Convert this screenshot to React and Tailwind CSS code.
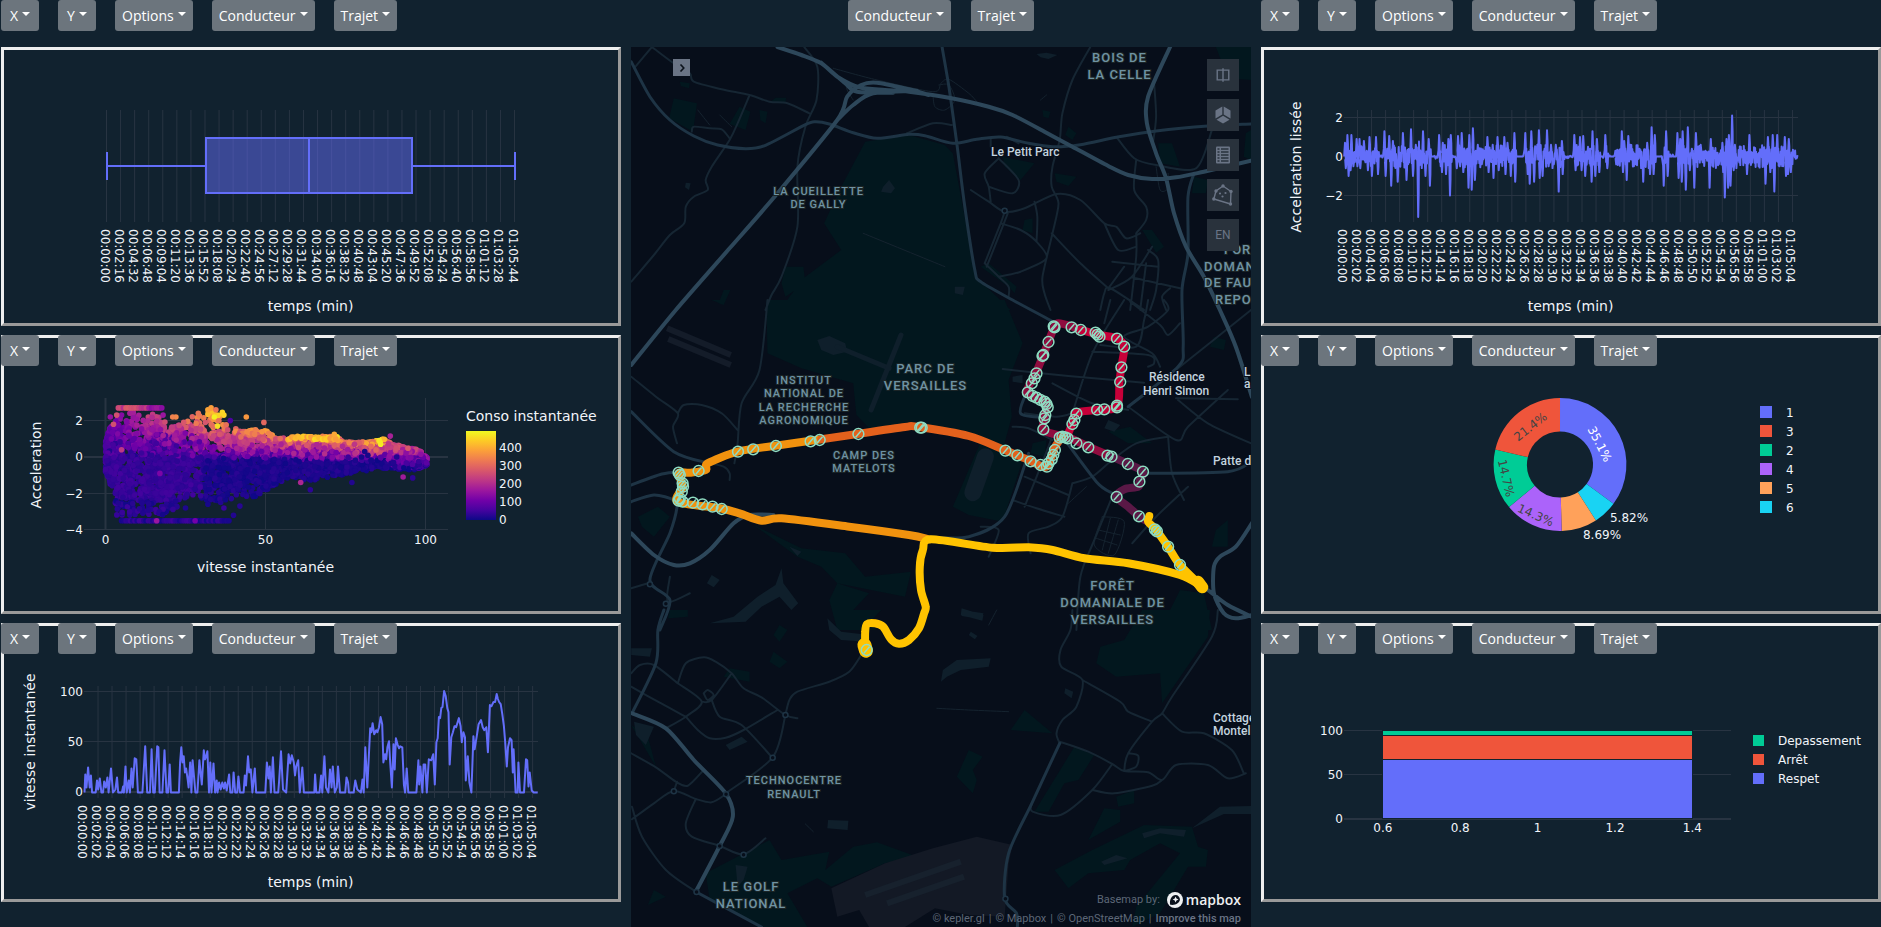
import React from "react";

/* ---------- shared helpers ---------- */

const rng = (seed) => () => {
  seed = (seed * 1664525 + 1013904223) % 4294967296;
  return seed / 4294967296;
};

const pad = (n) => String(n).padStart(2, "0");
const clock = (s) => `${pad(Math.floor(s / 3600))}:${pad(Math.floor(s / 60) % 60)}:${pad(s % 60)}`;

const parse = (str) =>
  str
    .trim()
    .split(/\s+/)
    .map((p) => p.split(",").map(Number));

const GRID = "#283442";
const BLUE = "#636efa";

/* ---------- toolbar ---------- */

function MenuButton({ label }) {
  return (
    <button
      type="button"
      className="flex h-[31px] min-w-[38px] items-center justify-center gap-1 rounded-[3px] bg-[#6c757d] px-[7px] text-[14px] leading-[21px] text-white"
    >
      {label}
      <svg viewBox="0 0 8 4" className="mb-[3px] h-1 w-2" aria-hidden="true">
        <path d="M0 0h8L4 4z" fill="currentColor" />
      </svg>
    </button>
  );
}

function Toolbar() {
  return (
    <div className="flex gap-[19px]">
      {["X", "Y", "Options", "Conducteur", "Trajet"].map((l) => (
        <MenuButton key={l} label={l} />
      ))}
    </div>
  );
}

function Panel({ overlay, children }) {
  return (
    <section className="relative border-[3px] border-t-[#eeeeee] border-r-[#9a9a9a] border-b-[#9a9a9a] border-l-[#eeeeee]">
      {overlay && (
        <div className="absolute -top-[3px] -left-[3px]">
          <Toolbar />
        </div>
      )}
      {children}
    </section>
  );
}

function Chart({ x, y, title, children }) {
  return (
    <svg
      viewBox={`${x} ${y} 614 273`}
      role="img"
      aria-label={title}
      className="block h-auto w-full font-['DejaVu_Sans',Verdana,sans-serif] text-[12px]"
      fill="#f2f5fa"
    >
      {children}
    </svg>
  );
}

function VGrid({ count, x0, step, y1, y2, seconds, from = 0 }) {
  return (
    <g>
      {Array.from({ length: count }, (_, i) => {
        const x = x0 + i * step;
        return (
          <g key={i}>
            {i >= from && <line x1={x} x2={x} y1={y1} y2={y2} stroke={GRID} />}
            <text transform={`translate(${x - 6} ${y2 + 7}) rotate(90)`}>{clock(i * seconds)}</text>
          </g>
        );
      })}
    </g>
  );
}

function HGrid({ rows, x1, x2 }) {
  return (
    <g>
      {rows.map(([label, y, w]) => (
        <g key={label}>
          <line x1={x1} x2={x2} y1={y} y2={y} stroke={GRID} strokeWidth={w || 1} />
          <text x={x1 - 1} y={y + 4} textAnchor="end">
            {label}
          </text>
        </g>
      ))}
    </g>
  );
}

function AxisTitle({ x, y, vertical, children }) {
  return (
    <text
      className="text-[14px]"
      textAnchor="middle"
      transform={`translate(${x} ${y})${vertical ? " rotate(-90)" : ""}`}
    >
      {children}
    </text>
  );
}

/* ---------- charts ---------- */

function BoxPlot() {
  return (
    <Chart x={4} y={50} title="temps (min)">
      <VGrid count={30} x0={106.5} step={14.07} y1={110} y2={222} seconds={136} />
      <g stroke={BLUE} strokeWidth="2">
        <rect x="206" y="138" width="206" height="55" fill={BLUE} fillOpacity="0.5" />
        <path d="M309 138v55M107 166h99M412 166h103M107 152v28M515 152v28" fill="none" />
      </g>
      <AxisTitle x={310.5} y={311}>temps (min)</AxisTitle>
    </Chart>
  );
}

const PLASMA = [
  [13, 8, 135], [70, 3, 159], [114, 1, 168], [156, 23, 158], [189, 55, 134],
  [216, 87, 107], [237, 121, 83], [251, 159, 58], [253, 202, 38], [240, 249, 33],
];

const plasma = (v) => {
  const t = Math.max(0, Math.min(0.999, v / 490)) * 9;
  const i = Math.floor(t);
  const c = PLASMA[i].map((a, k) => Math.round(a + (PLASMA[i + 1][k] - a) * (t - i)));
  return `rgb(${c.join(",")})`;
};

const UPPER = parse(
  "0,0.8 1,1.5 4,2.3 8,2.5 14,2.4 18,2.2 20,1.8 24,2 28,2.3 33,2.6 37,2.1 40,1.6 45,1.5 50,1.5 53,1.1 60,1.0 65,1.15 72,1.15 75,0.85 83,0.85 87,1 90,0.7 95,0.5 98,0.4 101,-0.1"
);
const LOWER = parse(
  "0,-0.8 2,-1.8 4,-2.3 12,-2.4 20,-2.4 30,-2.4 40,-2.4 47,-2.2 52,-1.6 58,-1.1 64,-1.3 70,-1.1 78,-0.9 85,-0.6 90,-0.7 97,-0.7 101,-0.4"
);

const at = (curve, x) => {
  for (let i = 1; i < curve.length; i++) {
    if (x <= curve[i][0]) {
      const [x0, y0] = curve[i - 1];
      const [x1, y1] = curve[i];
      return y0 + ((y1 - y0) * (x - x0)) / (x1 - x0);
    }
  }
  return curve[curve.length - 1][1];
};

const CLOUD = (() => {
  const r = rng(7);
  const pts = [];
  for (let i = 0; i < 4400; i++) {
    const v = 100.5 * (r() < 0.55 ? Math.pow(r(), 1.15) : r());
    const hi = at(UPPER, v);
    const lo = at(LOWER, v);
    const a = lo + (hi - lo) * r();
    if (v < 27 && a > 1.7 && r() < 0.65) continue;
    if (v > 27 && v < 45 && a > 1.5 && r() < 0.6) continue;
    if (v > 22 && a < -1.7 && r() < 0.65) continue;
    if (v > 53 && a < -0.6 && r() < 0.5) continue;
    let conso;
    if (v > 88) conso = 130 + a * 190 + (r() - 0.5) * 110;
    else if (a < 0.1 - v * 0.004) conso = (v < 30 ? 26 : 2) + r() * 26;
    else conso = 50 + a * (26 + v * 3.3) + v * 0.6 + (r() - 0.5) * (50 + v * 1.4);
    if (v < 30 && a > 0 && a < 1.4 && r() < 0.3) conso *= 0.5;
    pts.push([v, a, conso]);
  }
  for (let v = 4; v <= 18; v += 0.8) pts.push([v, 2.7, v < 13 ? 200 + 90 * r() : 130 + 40 * r()]);
  for (let v = 5; v <= 39; v += 0.7) pts.push([v, -3.5, 50 * r()]);
  for (let i = 0; i < 75; i++) pts.push([3 + 20 * r(), -2.4 - 0.8 * r(), 45 * r()]);
  for (let v = 57; v <= 72; v += 0.6) pts.push([v, 0.95 + 0.2 * r(), 370 + 90 * r()]);
  parse(
    "44,2.2,370 40,-3.2,20 42,-2.7,25 37,-2.8,40 25,-2.8,15 36,-2.5,20 32,-2.6,10 89,1.15,180 49.5,1.9,300 61,-1.4,190 93,-1.1,170 96,-1.15,30 77,-1.4,20 64,-1.8,30 71.5,1.25,390 22,2.2,350 32,2.6,390 36.5,2.45,450 34,2.2,480 35,1.7,460 86,0.7,480 85.5,0.9,470 85.8,0.8,470 5,0.4,220 2.5,1.8,260 3.5,2.3,260 17,-0.9,120 28,-3.5,110 16,-3.5,160 1.5,2.2,150 18,2.3,160 21,2.2,340 29,2.4,320 33,2.7,380 34.5,2.6,320 37,2.3,450 39,2,60 90,-0.3,20 91,0,20 80,0,10 81,0.3,10 82,0.1,10 83,-0.2,10"
  ).forEach((p) => pts.push(p));
  return pts;
})();

function ScatterPlot() {
  return (
    <Chart x={4} y={338} title="Acceleration / vitesse instantanée">
      <g stroke={GRID}>
        <line x1="105.5" x2="105.5" y1="398" y2="530" strokeWidth="2" />
        <line x1="265.5" x2="265.5" y1="398" y2="530" />
        <line x1="425.5" x2="425.5" y1="398" y2="530" />
      </g>
      <HGrid x1={84} x2={448} rows={[["2", 420.5], ["0", 457, 2], ["−2", 493.5], ["−4", 529.5]]} />
      <g>
        {CLOUD.map(([v, a, c], i) => (
          <circle
            key={i}
            cx={(105.5 + v * 3.2).toFixed(1)}
            cy={(457 - a * 18.2).toFixed(1)}
            r="2.8"
            fill={plasma(c)}
          />
        ))}
      </g>
      <g textAnchor="middle">
        <text x="105.5" y="544">0</text>
        <text x="265.5" y="544">50</text>
        <text x="425.5" y="544">100</text>
      </g>
      <AxisTitle x={265.5} y={572}>vitesse instantanée</AxisTitle>
      <AxisTitle x={41} y={465} vertical>Acceleration</AxisTitle>
      <defs>
        <linearGradient id="plasma" x1="0" x2="0" y1="1" y2="0">
          {PLASMA.map((c, i) => (
            <stop key={i} offset={i / 9} stopColor={`rgb(${c.join(",")})`} />
          ))}
        </linearGradient>
      </defs>
      <rect x="466" y="431" width="30" height="89" fill="url(#plasma)" />
      <text x="466" y="421" className="text-[14px]">Conso instantanée</text>
      {[0, 100, 200, 300, 400].map((v) => (
        <text key={v} x="499" y={524 - v * 0.18}>{v}</text>
      ))}
    </Chart>
  );
}

const SPEED = parse(`0,0 2,18 5,5 9,25 13,5 16,17 19,0 28,0 31,12 34,3 38,14 42,0 46,0 49,11 53,5 57,15 60,0 66,24 71,0 77,3
81,15 84,0 93,0 96,6 98,0 102,26 105,0 110,12 113,0 117,24 120,5 125,34 129,33 133,0 144,0 151,46 156,0 163,0 167,43 171,0 175,0
181,46 184,45 187,0 194,0 199,42 204,0 208,0 212,28 215,0 235,0 238,30 241,45 244,30 247,36 250,20 253,24 257,12 259,5 263,30 266,0
269,32 276,0 281,0 286,32 292,8 297,42 300,33 303,36 306,41 310,0 313,30 316,0 321,29 325,0 329,12 331,0 335,10 339,3 343,10 347,4
350,10 354,2 360,18 363,0 368,0 371,20 375,0 380,0 383,16 387,0 396,0 399,17 402,7 407,36 410,20 414,23 418,0 424,24 427,0 450,0
454,30 458,14 461,26 464,0 469,35 473,0 482,0 484,10 489,41 494,3 502,0 508,38 512,29 516,37 521,30 524,17 527,26 532,32 536,0
542,25 546,0 572,0 574,18 577,0 585,0 589,17 592,0 597,36 601,5 607,0 611,23 615,5 618,26 623,0 628,5 631,26 636,0 649,0 652,15
656,10 658,0 670,0 674,12 679,3 688,0 692,13 695,0 699,45 704,5 711,64 714,60 717,69 721,58 726,62 729,60 733,65 737,75 741,68
744,30 748,38 751,33 754,45 758,51 761,30 765,5 769,48 772,23 775,54 779,48 783,44 786,46 791,45 795,8 798,0 802,24 806,0 826,0
831,32 833,8 836,26 841,0 844,28 848,28 852,0 857,33 863,32 868,38 872,8 876,50 879,54 882,75 885,74 888,84 891,85 895,101 899,96
903,84 906,80 909,28 913,55 917,60 921,66 925,65 932,74 936,66 939,50 943,60 947,55 949,12 954,36 958,10 963,0 968,56 971,43 976,55
981,68 987,72 991,65 995,62 1000,65 1004,40 1009,87 1013,86 1018,90 1022,90 1026,98 1029,93 1032,90 1036,88 1040,78 1044,66 1047,50
1051,26 1054,45 1059,54 1063,52 1066,20 1068,43 1073,0 1078,0 1080,30 1084,0 1094,0 1099,33 1102,32 1105,6 1108,20 1113,2 1118,0 1128,0`);

function SpeedPlot() {
  const points = SPEED.map(([t, v]) => `${(84.5 + t / 2.489).toFixed(1)},${(793.5 - v * 1.005).toFixed(1)}`).join(" ");
  return (
    <Chart x={4} y={627} title="vitesse instantanée / temps (min)">
      <VGrid count={33} x0={84} step={14.02} y1={687} y2={799} seconds={122} from={1} />
      <HGrid x1={84} x2={538} rows={[["100", 692.5], ["50", 742.5], ["0", 793, 2]]} />
      <polyline points={points} fill="none" stroke={BLUE} strokeWidth="2" strokeLinejoin="round" />
      <AxisTitle x={310.5} y={888}>temps (min)</AxisTitle>
      <AxisTitle x={35} y={743} vertical>vitesse instantanée</AxisTitle>
    </Chart>
  );
}

const SPIKES = parse(`236,.7 238,-.6 242,1.1 245,-1 248,.3 250,-.7 252,1.1 257,-.5 265,.9 267,-.5 272,.9 274,-.6 283,.8 287,-.3 290,.3 293,-.7
297,1 303,-1 313,1 318,-.9 334,1.3 337,-1 341,.4 346,1.05 351,-1.5 355,.8 367,-1.3 380,1.2 389,-1.2 400,1.4 405,-1 412,.6 418,-3.1 430,1.3
436,-1 444,.9 447,-1.5 470,1.1 477,-.8 479,.7 487,-.9 493,.9 497,-2 499,1.1 514,-.6 517,1.05 522,-.5 526,1.2 530,-.8 540,.4 543,-1.6 545,1.1
551,-1.7 554,1.45 559,-1.2 566,.6 576,-.4 583,.3 590,1 593,-.8 603,.6 605,-1.1 615,1 618,-.7 632,1 635,-.9 640,.7 648,-1 657,1.2 659,-1.3
684,1.2 690,-.9 695,-1.4 699,1.3 706,-1.3 714,.6 718,1.35 720,-1.1 727,-1 732,.4 738,1.35 742,-.5 748,.6 755,-.4 760,.6 767,-1.8 775,.8 777,-.9
806,1.1 809,-.7 820,1 824,-.7 828,1.05 833,-1 840,.5 849,-1.3 851,1.3 858,-1 862,.9 868,-.8 883,1.1 888,-.6 908,.3 910,-.4 924,1.3 927,-.8
930,.8 936,-1.2 940,1.05 945,.6 958,-.4 968,.4 977,-1.3 987,.7 994,-.9 998,1.5 1003,-.9 1006,1.1 1028,-1.5 1034,1.3 1038,-1 1062,1.2 1065,-1.1
1069,.9 1073,-1.3 1075,1.3 1083,-1.7 1088,1.5 1093,-.7 1098,.4 1104,-1.6 1108,1.2 1114,.5 1120,.6 1125,-.3 1132,.3 1142,-1.6 1145,.9 1154,.3
1165,-.4 1174,.7 1176,-.8 1180,-2.1 1184,.9 1188,-1.6 1190,1.1 1194,-1.5 1198,2.1 1202,-.7 1205,.6 1212,-.2 1222,.3 1235,-.9 1241,1.1 1250,.2
1260,-.3 1270,.2 1281,-1.4 1287,1 1293,-.8 1299,1.1 1303,-1.8 1310,1.1 1316,-.5 1329,1 1332,-1 1337,-.9 1339,.9 1344,-.8 1352,.15 1358,-.1`);

const ACCEL = (() => {
  const r = rng(11);
  const out = [[234, 0]];
  SPIKES.forEach(([x, v], i) => {
    out.push([x - 1.5, v * 0.3], [x, v], [x + 1.2, v * 0.6], [x + 2, -v * 0.25]);
    const next = SPIKES[i + 1];
    if (!next) return;
    const gap = next[0] - x;
    if (gap > 14) {
      for (let q = x + 3; q < next[0] - 3; q += 1.6) out.push([q, r() < 0.2 ? (r() - 0.5) * 0.25 : 0]);
    } else if (gap > 4) {
      let sign = 1;
      for (let q = x + 2.5; q < next[0] - 2; q += 1.3) {
        out.push([q, sign * (0.1 + r() * 0.5)]);
        sign = -sign;
      }
    }
  });
  out.push([1362, 0]);
  return out;
})();

function AccelPlot() {
  const points = ACCEL.map(([t, v]) => `${(1250 + t / 2.485).toFixed(1)},${(156.5 - v * 19.5).toFixed(1)}`).join(" ");
  return (
    <Chart x={1264} y={50} title="Acceleration lissée / temps (min)">
      <VGrid count={33} x0={1343.5} step={14.03} y1={110} y2={222} seconds={122} from={1} />
      <HGrid x1={1344} x2={1798} rows={[["2", 117.5], ["0", 156.5, 2], ["−2", 195.5]]} />
      <polyline points={points} fill="none" stroke={BLUE} strokeWidth="2" strokeLinejoin="round" />
      <AxisTitle x={1570.5} y={311}>temps (min)</AxisTitle>
      <AxisTitle x={1301} y={167} vertical>Acceleration lissée</AxisTitle>
    </Chart>
  );
}

const SLICES = [
  [35.1, BLUE], [5.82, "#19d3f3"], [8.69, "#ffa15a"], [14.3, "#ab63fa"], [14.7, "#00cc96"], [21.4, "#ef553b"],
];

function Donut() {
  const cx = 1560;
  const cy = 464.5;
  const R = 66.4;
  const r = 33;
  let acc = 0;
  const pt = (rad, p) => {
    const a = (p / 100) * 2 * Math.PI;
    return `${(cx + rad * Math.sin(a)).toFixed(2)} ${(cy - rad * Math.cos(a)).toFixed(2)}`;
  };
  return (
    <Chart x={1264} y={338} title="Répartition">
      {SLICES.map(([p, color]) => {
        const a = acc;
        acc += p;
        return (
          <path
            key={color}
            fill={color}
            d={`M${pt(R, a)}A${R} ${R} 0 0 1 ${pt(R, acc)}L${pt(r, acc)}A${r} ${r} 0 0 0 ${pt(r, a)}Z`}
          />
        );
      })}
      <g textAnchor="middle">
        <text fill="#ffffff" transform="translate(1596 446) rotate(63)">35.1%</text>
        <text fill="#444444" transform="translate(1533 430) rotate(-38)">21.4%</text>
        <text fill="#444444" transform="translate(1502 479) rotate(77)">14.7%</text>
        <text fill="#444444" transform="translate(1534 519) rotate(24)">14.3%</text>
        <text x="1629" y="522">5.82%</text>
        <text x="1602" y="539">8.69%</text>
      </g>
      {[["1", BLUE], ["3", "#ef553b"], ["2", "#00cc96"], ["4", "#ab63fa"], ["5", "#ffa15a"], ["6", "#19d3f3"]].map(
        ([label, color], i) => (
          <g key={label}>
            <rect x="1760" y={406 + i * 19} width="12" height="12" fill={color} />
            <text x="1786" y={417 + i * 19}>{label}</text>
          </g>
        )
      )}
    </Chart>
  );
}

function StackedBar() {
  return (
    <Chart x={1264} y={627} title="Depassement, Arrêt, Respet">
      <HGrid x1={1344} x2={1731} rows={[["100", 731.5], ["50", 775.5], ["0", 820, 2]]} />
      <g stroke="#11232f" strokeWidth="1">
        <rect x="1382.5" y="760.5" width="310" height="59" fill={BLUE} />
        <rect x="1382.5" y="736.5" width="310" height="24" fill="#ef553b" />
        <rect x="1382.5" y="731.5" width="310" height="5" fill="#00cc96" />
      </g>
      <g textAnchor="middle">
        {["0.6", "0.8", "1", "1.2", "1.4"].map((t, i) => (
          <text key={t} x={1382.8 + i * 77.4} y="833">{t}</text>
        ))}
      </g>
      {[["Depassement", "#00cc96"], ["Arrêt", "#ef553b"], ["Respet", BLUE]].map(([label, color], i) => (
        <g key={label}>
          <rect x="1753" y={736 + i * 19} width="11" height="11" fill={color} />
          <text x="1778" y={746 + i * 19}>{label}</text>
        </g>
      ))}
    </Chart>
  );
}

/* ---------- map ---------- */

const project = (oy, [x, y]) => [630 + x / 2.509, oy + y / 3];

const line = (oy, str) =>
  "M" + parse(str).map((p) => project(oy, p).map((n) => n.toFixed(1)).join(" ")).join("L");

const curve = (oy, str) => {
  const p = parse(str).map((q) => project(oy, q));
  let d = `M${p[0][0].toFixed(1)} ${p[0][1].toFixed(1)}`;
  for (let i = 0; i < p.length - 1; i++) {
    const a = p[i - 1] || p[i];
    const b = p[i];
    const c = p[i + 1];
    const e = p[i + 2] || c;
    const n = [
      b[0] + (c[0] - a[0]) / 7, b[1] + (c[1] - a[1]) / 7,
      c[0] - (e[0] - b[0]) / 7, c[1] - (e[1] - b[1]) / 7,
      c[0], c[1],
    ].map((v) => v.toFixed(1));
    d += `C${n.join(" ")}`;
  }
  return d;
};

const GREENS = [
  [0, "590,425 700,405 790,435 810,460 868,830 955,930 380,930 400,890 440,830 530,750 487,670 530,560"],
  [0, "110,295 168,310 158,395 98,355"], [0, "125,245 150,250 148,265 128,258"], [0, "275,320 302,335 290,390 250,372"],
  [0, "325,330 345,335 340,370 327,360"], [0, "365,293 392,293 390,310 350,308"], [0, "1470,141 1558,141 1558,240 1500,235"],
  [0, "935,470 1015,490 980,540 940,500"], [0, "1065,520 1120,530 1100,558 1070,545"], [0, "1325,430 1360,430 1380,500 1330,490"],
  [0, "390,800 435,800 440,850 390,890 380,850"], [0, "235,870 252,870 235,915 222,910"], [0, "1285,690 1310,690 1340,740 1320,758"],
  [0, "1415,530 1450,540 1445,580 1410,580"], [0, "1545,400 1558,390 1558,480 1540,470"], [0, "990,660 1010,655 1010,700 985,690"],
  [0, "880,800 900,790 970,860 965,880 950,860"], [0, "1100,380 1120,400 1110,420 1092,405"], [0, "1035,330 1055,335 1050,355 1037,350"],
  [300, "342,0 940,0 985,130 950,240 958,350 935,450 860,408 740,380 600,385 568,345 560,250 430,205 345,160"],
  [300, "880,425 935,450 985,480 935,665 850,645 810,620"],
  [300, "310,675 430,745 540,760 590,830 705,815 690,890 520,850 480,800 420,770"],
  [300, "520,850 600,880 560,930 620,990 520,990 500,900"],
  [300, "1380,870 1440,880 1460,990 1330,990"], [300, "1200,395 1255,380 1310,430 1250,430"], [300, "1465,110 1495,120 1490,150 1455,140"],
  [300, "1470,690 1500,660 1500,740 1460,740"], [300, "100,930 145,930 145,950 100,955"], [300, "20,650 70,620 100,650 60,710 30,680"],
  [300, "205,0 240,0 235,15"], [300, "1010,430 1045,420 1040,470 1005,460"],
  [610, "190,790 350,690 380,750 500,725 490,780 560,710 620,697 720,740 640,760 505,830 470,805 395,850 445,951 330,951 200,870"],
  [610, "1115,410 1165,435 1125,510 1090,520 1050,605 1015,605"],
  [610, "1285,0 1455,0 1450,80 1335,280 1330,190 1220,200 1170,160 1180,110 1240,90"],
  [610, "990,300 1060,370 955,360"], [610, "850,420 885,440 860,480 870,510 860,550 820,500"],
  [610, "1065,780 1160,720 1290,645 1410,650 1425,710 1450,720 1445,770 1400,770 1330,910 1260,951 1270,890 1380,730 1330,700 1255,750 1240,780 1150,790 1100,835"],
  [610, "1190,595 1230,600 1230,635 1150,690"], [610, "1220,560 1265,540 1265,580 1225,590"],
  [610, "100,0 145,0 140,20 95,25"], [610, "375,45 395,60 375,95 360,75"], [610, "360,125 395,155 375,175 350,155"],
  [610, "250,175 300,185 300,215 235,200"], [610, "3,345 45,380 65,470"], [610, "60,840 90,860 45,885"], [610, "515,0 630,0 600,40 540,30"],
];

const WATERS = [
  [0, "1020,162 1045,158 1072,165 1050,177 1030,172"], [0, "650,540 665,565 655,580 630,575 635,560"], [0, "140,548 152,550 148,570 138,562"],
  [0, "815,860 840,860 835,885 815,880"],
  [300, "470,120 500,108 540,130 545,155 510,165 480,150"], [300, "205,825 225,840 210,862 193,850"],
  [300, "1200,360 1230,375 1215,395 1190,385"], [300, "832,925 887,945 884,962 830,945"], [300, "400,740 430,755 420,768"],
  [300, "380,805 385,850 422,910 405,930 375,890 330,920 290,965 200,970 260,950 320,890 365,855"],
  [300, "960,230 985,225 985,250 960,245"],
  [610, "3,115 55,115 50,140 3,135"], [610, "495,25 530,65 600,75 590,95 530,90 500,60"],
  [610, "780,215 785,180 820,150 905,145 900,170 830,180 795,200"], [610, "497,630 548,632 546,660 495,655"],
  [610, "10,335 60,350 40,405 15,375"], [610, "240,405 280,380 295,395 250,420"], [610, "833,0 887,10 882,28 832,18"],
  [610, "1285,670 1330,655 1395,660 1390,680 1330,670 1290,685"], [610, "1182,755 1220,735 1248,745 1190,765"],
  [610, "1410,655 1480,590 1558,588 1558,612 1490,612"], [610, "265,765 295,770 285,810 270,830"],
  [610, "1092,235 1112,245 1108,265 1090,250"], [610, "855,65 872,78 865,88 850,75"],
];

const MINOR = [
  [0, "55,141 10,205"], [0, "55,141 110,190 150,220 160,245 230,268 300,285 350,305 395,310 450,340"],
  [0, "437,141 470,200 468,300 440,380 420,500 420,680 380,830 355,885 340,930"],
  [0, "300,285 270,370 250,420 205,500 190,540 195,570 160,590 140,620 136,670 100,705 60,765 3,845"],
  [0, "155,395 160,380 200,385 230,388 250,415"],
  [0, "1155,141 1110,240 1085,340 1078,420 1060,500 1058,560 1075,610 1060,700 1035,830 1040,880 1055,930"],
  [0, "695,400 760,370 808,375"], [0, "855,570 900,605 940,635 990,625 1070,582 1130,600 1190,670 1220,680 1245,715 1280,700"],
  [0, "925,475 890,520 900,560 905,605"], [0, "925,475 975,540 960,580 900,560"], [0, "940,635 930,670 890,790"],
  [0, "948,640 938,670 895,800"], [0, "930,670 980,690 1020,725 1045,775 980,815 925,830"], [0, "890,790 925,830 950,860 950,890"],
  [0, "1015,605 1022,650 1020,725"], [0, "1058,700 1130,790 1200,865"], [0, "1200,865 1240,800"], [0, "1190,670 1225,750 1270,740"],
  [0, "1210,785 1325,800"], [0, "1310,740 1258,832 1200,870"], [0, "1270,700 1270,770 1255,930"], [0, "1258,832 1380,865"],
  [0, "1300,750 1325,780 1320,870 1305,930"], [0, "1295,790 1280,930"], [0, "1220,410 1265,475 1320,495 1420,505 1460,390"],
  [0, "1315,250 1320,350 1312,430"], [0, "1270,480 1265,570 1295,620 1295,660 1270,700"],
  [0, "1180,930 1190,880 1205,865 1290,930"], [0, "1345,930 1335,890 1355,865"], [0, "905,415 905,440"], [0, "945,410 975,430"],
  [300, "345,0 325,210 280,310 270,430 262,490"], [300, "3,230 65,290 120,340 108,380 118,430"],
  [300, "120,340 135,315 180,315 230,340 270,390"], [300, "200,490 235,500 250,520 250,540"],
  [300, "1210,590 1165,720 1130,830 1120,990"], [300, "935,207 1100,228 1290,248"], [300, "1240,0 1160,160 1100,380"],
  [300, "1160,155 1300,165 1315,190 1300,200"], [300, "1300,0 1290,60 1270,140 1180,135"], [300, "1060,250 1160,310 1250,330"],
  [300, "1205,0 1190,70"], [300, "1255,5 1330,75 1350,105 1380,70"], [300, "1340,0 1350,30 1300,80 1240,110 1310,160 1330,200"],
  [300, "960,380 1000,385 1060,420"], [300, "990,340 1070,350 1110,340"], [300, "1060,400 1050,440 990,620"],
  [300, "960,600 1020,625 1090,650"], [300, "990,530 1100,585"], [300, "1110,550 1085,650 1050,680 1000,700 1005,760"],
  [300, "1110,550 1160,530 1210,480 1270,430 1350,410"], [300, "1370,295 1525,298"], [300, "1250,320 1370,420 1400,380 1500,270"],
  [300, "1375,300 1450,370 1558,430"], [300, "1350,410 1360,520 1390,600"], [300, "1400,560 1320,650 1260,730"],
  [300, "1250,320 1380,200 1558,30"], [300, "880,680 925,690 900,770"], [300, "45,850 3,865"], [300, "100,830 95,905 150,880"],
  [610, "5,590 30,680 90,780 165,845"], [610, "3,190 25,165 60,165 120,220"],
  [610, "120,220 140,160 185,142 215,155 255,190 285,235 330,262 390,315 420,325"], [610, "120,220 180,275 140,320 90,355"],
  [610, "180,275 205,270 255,190"], [610, "205,270 225,320 280,345 355,440"], [610, "140,320 170,360 200,385 240,383 285,360 370,300"],
  [610, "3,230 70,275 140,320"], [610, "390,315 358,442 240,550"], [610, "390,315 400,270 420,245 500,215 550,185 580,135"],
  [610, "3,430 65,472 115,515 145,527 185,480"], [610, "5,628 60,580 110,543 165,567 205,577 240,553"], [610, "118,515 110,543"],
  [610, "165,567 140,640 155,680 225,708 285,733 340,685"],
  [610, "1110,0 1105,60 1080,120 1082,170 1135,210 1120,290 1085,330 1070,370 1078,400"],
  [610, "1008,580 1010,605 1080,615 1160,540 1210,462"],
  [610, "1078,395 1150,425 1210,462 1240,483 1300,487 1335,510 1370,465 1450,465 1500,505 1545,490"],
  [610, "1160,540 1215,550 1310,527 1335,510"], [610, "1240,483 1250,430 1310,335 1335,310 1360,260 1460,80 1475,0"],
  [610, "1135,210 1230,275 1250,305 1310,335"], [610, "1335,310 1385,365 1440,370 1510,420 1540,490"],
  [610, "1250,430 1275,437 1270,470 1240,483"], [610, "185,250 195,240 210,255 195,270 185,250"],
];

const HAIR = [
  [0, "170,330 200,375"], [0, "225,345 255,380"], [0, "510,205 620,240 760,275 780,250 800,238 850,280 870,305"],
  [0, "760,280 765,320 790,330 815,300 800,255 775,255"], [0, "540,240 545,270 560,300"], [0, "1320,500 1330,570 1350,565 1350,520"],
  [0, "585,700 790,800"], [0, "1030,300 1045,285"], [300, "1185,650 1240,665 1215,765 1165,735 1185,650"],
  [300, "1205,655 1185,750"], [300, "1225,660 1200,760"], [300, "1175,690 1230,705"], [300, "1170,715 1222,735"],
  [300, "1100,610 1145,560"], [610, "440,642 460,665"], [610, "770,295 850,300 950,305"], [610, "920,0 900,45"],
];

const MEDIUM = [
  [0, "3,185 50,290 100,360 160,408 220,435 290,446 340,436 440,374 465,365 500,372 560,398 620,415 700,403 740,407 810,430 870,418 930,411 1000,430 1060,440 1130,434 1220,412 1320,393 1450,378 1558,372"],
  [0, "783,141 800,260 820,430 840,620 865,810 880,845 960,900 1062,965"],
  [0, "1415,520 1400,590 1400,760 1385,870 1388,1040 1375,1100 1250,1220"],
  [300, "3,335 110,455 200,490"], [300, "3,555 80,522 130,515"], [300, "3,605 60,585 110,600 118,620 100,700 50,840 100,900 75,990"],
  [300, "1085,410 1170,545 1210,580"], [300, "1290,520 1500,515 1558,485"], [300, "755,712 850,710 940,650 1000,460"],
  [300, "1000,265 980,340 1050,352"],
  [610, "85,0 70,60 65,160 5,310"], [610, "165,845 330,951"], [610, "1078,400 1008,580 950,730 940,865 970,910 972,951"],
];

const MAJOR = [
  [0, "370,141 430,165 480,190 520,230 575,262 640,270 700,275 800,293 900,320 960,345 1040,395 1110,440 1200,498 1250,525 1310,537 1370,532 1440,515 1558,482"],
  [0, "1355,141 1300,290 1297,370 1320,460 1345,535 1365,640 1395,740 1440,830 1480,930 1520,1040 1560,1190"],
  [0, "3,1095 115,930 250,745 370,580 520,360 545,290 580,255 620,248 700,268 750,285"], [0, "520,360 560,315 610,280 720,272"],
  [0, "480,188 540,250 570,275 660,278"],
  [300, "3,700 60,765 110,795 150,790 200,750 260,670 300,645 360,645"],
  [300, "1560,670 1520,740 1480,770 1465,800 1465,880 1490,940 1520,955 1560,945"], [300, "1450,870 1500,915 1560,950"],
  [610, "5,310 90,355 160,450 240,550 258,620 225,708 165,845"],
];

const ROUTES = [
  ["#900c3f", "1095,408 1075,405 1037,390 1040,350 1045,310 1015,290 995,275 1020,215 1037,165 1050,125 1065,80 1075,70 1110,80 1130,90"],
  ["#c70039", "1130,90 1180,105 1222,115 1240,140 1233,200 1228,245 1222,320 1170,330 1120,338 1110,370 1098,405"],
  ["#900c3f", "1098,410 1150,440 1205,468"],
  ["#5a1846", "1205,468 1250,492 1287,515 1278,545 1275,560 1240,568 1220,590 1250,620 1278,650 1300,665"],
  ["#f1920e", "750,718 700,705 550,680 380,655 330,662 275,640 225,625 120,605 132,560 122,520 150,518 190,510 195,490 270,455 365,437 480,418"],
  ["#e3611c", "480,418 570,402 690,381 720,380 850,408 940,450 1000,480 1045,500 1065,445 1075,425 1085,410"],
  ["#ffc300", "1303,648 1300,665 1320,690 1350,740 1380,795 1435,860"],
  ["#ffc300", "1435,860 1380,825 1250,790 1140,775 1060,750 1000,742 910,743 755,718 735,750 727,800 730,870 742,920 738,940 725,985 700,1020 675,1031 655,1018 635,980 615,970 595,972 590,995 590,1045"],
];

const STOPS = parse(`1065,82 1063,79 1108,82 1131,90 1168,98 1173,104 1178,110 1222,116 1240,140 1233,202 1230,246 1222,317 1222,322 1190,328
1172,329 1120,341 1115,360 1110,372 1050,126 1037,165 1035,168 1020,220 1015,235 1008,250 998,277 1010,288 1020,293 1030,300 1040,305 1045,312
1048,322 1042,345 1040,355 1037,388 1078,413 1085,410 1092,412 1098,415 1120,430 1150,442 1198,467 1208,470 1249,492 1287,515 1278,545 1221,591
1277,649 1317,688 1322,694 1350,740 1380,795 1066,450 1062,465 1058,478 1050,490 1046,500 1030,495 1005,484 972,466 942,452 732,383 728,383
573,402 476,420 453,424 366,438 309,448 271,455 172,513 122,518 125,525 132,550 133,560 130,575 125,595 122,602 132,605 158,608 182,613 207,620
230,627 594,1050`);

const PLACES = [
  ["13", 1119.5, [[62, "BOIS DE"], [79, "LA CELLE"]]],
  ["11", 818.5, [[195, "LA CUEILLETTE"], [208, "DE GALLY"]]],
  ["13", 925.5, [[373, "PARC DE"], [390, "VERSAILLES"]]],
  ["11", 804, [[384, "INSTITUT"], [397, "NATIONAL DE"], [411, "LA RECHERCHE"], [424, "AGRONOMIQUE"]]],
  ["11", 864, [[459, "CAMP DES"], [472, "MATELOTS"]]],
  ["13", 1112.5, [[590, "FORÊT"], [607, "DOMANIALE DE"], [624, "VERSAILLES"]]],
  ["11", 794, [[784, "TECHNOCENTRE"], [798, "RENAULT"]]],
  ["13", 751, [[891, "LE GOLF"], [908, "NATIONAL"]]],
  ["13", 1230, [[254, "FOR", 1224], [271, "DOMAN", 1204], [287, "DE FAU", 1204], [304, "REPO", 1215]]],
];

const TOWNS = [
  [991, 156, "Le Petit Parc"], [1149, 381, "Résidence"], [1143, 395, "Henri Simon"], [1213, 465, "Patte d"],
  [1213, 722, "Cottage"], [1213, 735, "Montel"], [1244, 376, "L"], [1244, 388, "a"],
];

function MapCanvas() {
  const draw = (list, fn) => list.map(([oy, s]) => fn(oy, s)).join("");
  return (
    <svg viewBox="631 47 620 880" className="block h-auto w-full bg-[#070e1a] font-[Roboto,sans-serif]" role="img" aria-label="Carte des trajets">
      <path d={draw(GREENS, line)} fill="#02171e" />
      <path
        d={line(610, "505,835 640,760 760,715 870,680 960,705 950,760 940,920 850,915 765,895 690,951 600,951 575,900 520,920")}
        fill="#131925"
      />
      <path d={draw(WATERS, line)} fill="#0f1f2b" />
      <g fill="none" stroke="#0f1f2b" strokeLinecap="round">
        <path d={line(300, "520,140 650,205")} strokeWidth="5" />
        <path d={line(300, "680,105 605,330")} strokeWidth="5" />
        <path d={line(300, "892,470 860,578")} strokeWidth="17" />
      </g>
      <g fill="none" stroke="#141c29" strokeWidth="6">
        <path d={line(300, "93,85 253,165")} />
        <path d={line(300, "96,117 253,195")} />
        <path d={line(610, "590,855 830,755")} stroke="#17212d" />
        <path d={line(610, "645,880 838,800")} stroke="#17212d" />
      </g>
      <g fill="none" strokeLinecap="round" strokeLinejoin="round">
        <path d={draw(HAIR, curve)} stroke="#15232f" strokeWidth="1" />
        <path d={draw(MINOR, curve)} stroke="#162633" strokeWidth="2" />
        <path d={draw(MEDIUM, curve)} stroke="#1e3445" strokeWidth="3" />
        <path d={draw(MAJOR, curve)} stroke="#2d475a" strokeWidth="4" />
      </g>
      <g fill="#070e1a" stroke="#1e3445" strokeWidth="1.5">
        {[[0, 940, 632], [610, 390, 315], [610, 358, 443], [610, 241, 553], [610, 225, 708], [610, 167, 846], [610, 285, 734], [610, 110, 544], [610, 942, 866], [300, 90, 911], [300, 50, 853]].map(
          ([oy, x, y]) => {
            const [cx, cy] = project(oy, [x, y]);
            return <circle key={`${cx}-${cy}`} cx={cx} cy={cy} r="2.5" />;
          }
        )}
      </g>
      {PLACES.map(([size, x, rows]) => (
        <g
          key={rows[0][1] + x}
          fill="#6f93a3"
          stroke="#1b2426"
          strokeWidth="2"
          paintOrder="stroke"
          className={size === "13" ? "text-[13px] font-medium tracking-[1px]" : "text-[11px] font-medium tracking-[1px]"}
        >
          {rows.map(([y, t, start]) => (
            <text key={t} x={start || x} y={y} textAnchor={start ? "start" : "middle"}>{t}</text>
          ))}
        </g>
      ))}
      <g fill="#c3d3df" stroke="#070e1a" strokeWidth="2" paintOrder="stroke" className="text-[12px] font-medium">
        {TOWNS.map(([x, y, t]) => (
          <text key={t} x={x} y={y}>{t}</text>
        ))}
      </g>
      <g fill="none" strokeWidth="8" strokeLinecap="round" strokeLinejoin="round">
        {ROUTES.map(([color, s]) => (
          <path key={s} d={curve(300, s)} stroke={color} />
        ))}
        <path d={line(300, "1425,845 1436,862")} stroke="#ffc300" strokeWidth="12" />
        <path d={line(300, "588,1035 592,1052")} stroke="#ffc300" strokeWidth="14" />
      </g>
      <g fill="none" stroke="#8fdcc2" strokeWidth="1.5">
        {STOPS.map((p, i) => {
          const [x, y] = project(300, p);
          return (
            <g key={i} transform={`translate(${x.toFixed(1)} ${y.toFixed(1)})`}>
              <circle r="5.4" />
              <path d="M-2.8 3.2L2.8 -3.2" />
            </g>
          );
        })}
      </g>
    </svg>
  );
}

const ICONS = {
  split: (
    <path d="M2.5 3.5h13v11h-13zM9 1.500v15" fill="none" stroke="currentColor" strokeWidth="1.6" />
  ),
  cube: (
    <g fill="currentColor">
      <path d="M8.300 0.500v8L1.500 12.500V4.500z" />
      <path d="M9.700 0.500v8l6.800 4V4.500z" />
      <path d="M9 9.800l6.500 3.900L9 17.500l-6.500-3.800z" />
    </g>
  ),
  legend: (
    <g>
      <rect x="2" y="0.500" width="14" height="17" rx="1" fill="currentColor" />
      <path
        d="M3.500 3h2M7 3h7.500M3.500 6h2M7 6h7.500M3.500 9h2M7 9h7.500M3.500 12h2M7 12h7.500M3.500 15h2M7 15h7.500"
        stroke="#29323c"
        strokeWidth="1.600"
      />
    </g>
  ),
  polygon: (
    <g transform="translate(-1 -1)">
      <path d="M10 1L18 6.500L17.500 19L0.800 14L3 6z" fill="none" stroke="currentColor" strokeWidth="1.400" />
      <g fill="currentColor">
        <circle cx="10" cy="1" r="1.700" /><circle cx="18" cy="6.500" r="1.700" /><circle cx="17.500" cy="19" r="1.700" />
        <circle cx="0.800" cy="14" r="1.700" /><circle cx="3" cy="6" r="1.700" />
        <circle cx="7" cy="8.500" r="1.100" /><circle cx="12.500" cy="8" r="1.100" /><circle cx="9.500" cy="11.500" r="1.100" />
      </g>
    </g>
  ),
};

function MapControls() {
  return (
    <div className="absolute top-3 right-3 flex flex-col gap-2 text-[#6a7485]">
      {Object.entries(ICONS).map(([name, icon]) => (
        <button key={name} type="button" aria-label={name} className="flex size-8 items-center justify-center bg-[#29323c]">
          <svg viewBox="0 0 18 18" className={name === "split" ? "size-4" : "size-[18px]"} overflow="visible">
            {icon}
          </svg>
        </button>
      ))}
      <button type="button" className="size-8 bg-[#29323c] font-[Roboto,sans-serif] text-[12px]">
        EN
      </button>
    </div>
  );
}

function MapPanel() {
  return (
    <section className="relative overflow-hidden">
      <MapCanvas />
      <button
        type="button"
        aria-label="Ouvrir le panneau"
        className="absolute top-3 left-[42px] flex size-[17px] items-center justify-center bg-[#6a7485]"
      >
        <svg viewBox="0 0 8 8" className="size-2" fill="none" stroke="#0c121b" strokeWidth="1.600">
          <path d="M2.500 0.500L5.800 4L2.500 7.500" />
        </svg>
      </button>
      <MapControls />
      <footer className="absolute right-[10px] bottom-0 flex flex-col items-end font-[Roboto,sans-serif] text-[11px] text-[#5d6777]">
        <div className="flex h-5 items-center">
          <span>Basemap by:</span>
          <a href="#mapbox" className="ml-[7px] flex items-center gap-[3px] font-['Open_Sans',sans-serif] text-[14px] leading-5 font-semibold text-[#eef0f2]">
            <svg viewBox="0 0 16 16" className="size-4" aria-hidden="true">
              <circle cx="8" cy="8" r="8" fill="#eef0f2" />
              <path d="M3.200 12.800C2 8 5 3 8.600 3a4.400 4.400 0 014.300 4.600C12.800 11 8.500 13.600 3.200 12.800z" fill="#0a111c" />
              <path d="M8.600 4.600l.9 2 2 .9-2 .9-.9 2-.9-2-2-.9 2-.9z" fill="#eef0f2" />
            </svg>
            mapbox
          </a>
        </div>
        <p className="flex gap-1 leading-[17px]">
          <a href="#kepler">© kepler.gl</a>|<a href="#mapbox-about">© Mapbox</a>|<a href="#osm">© OpenStreetMap</a>|
          <a href="#improve" className="font-medium text-[#6a7485]">Improve this map</a>
        </p>
      </footer>
    </section>
  );
}

/* ---------- page ---------- */

export default function App() {
  return (
    <main className="grid min-h-screen grid-cols-3 items-start gap-[10px] bg-[#11222f] pl-px font-['Open_Sans','Noto_Sans',sans-serif]">
      <div className="flex flex-col gap-[9px]">
        <div>
          <div className="pb-4"><Toolbar /></div>
          <Panel><BoxPlot /></Panel>
        </div>
        <Panel overlay><ScatterPlot /></Panel>
        <Panel overlay><SpeedPlot /></Panel>
      </div>
      <div>
        <div className="flex justify-center gap-5 pb-4">
          <MenuButton label="Conducteur" />
          <MenuButton label="Trajet" />
        </div>
        <MapPanel />
      </div>
      <div className="flex flex-col gap-[9px]">
        <div>
          <div className="pb-4"><Toolbar /></div>
          <Panel><AccelPlot /></Panel>
        </div>
        <Panel overlay><Donut /></Panel>
        <Panel overlay><StackedBar /></Panel>
      </div>
    </main>
  );
}
